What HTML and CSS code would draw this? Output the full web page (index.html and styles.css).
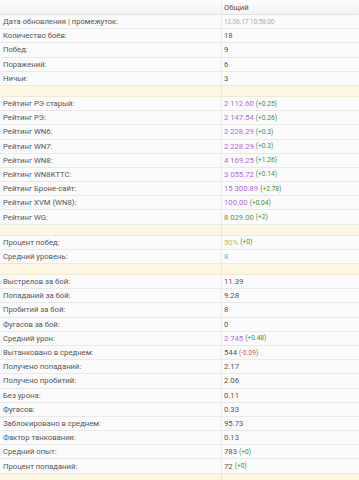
FILE: index.html
```html
<!DOCTYPE html>
<html lang="ru">
<head>
<meta charset="utf-8">
<link rel="stylesheet" href="styles.css">
</head>
<body>
<div class="stats">
  <div class="row head"><div class="k"></div><div class="v">Общий</div></div>
  <div class="row"><div class="k">Дата обновления | промежуток:</div><div class="v"><span class="date">12.06.17 10:58:00</span></div></div>
  <div class="row"><div class="k">Количество боёв:</div><div class="v">18</div></div>
  <div class="row"><div class="k">Побед:</div><div class="v">9</div></div>
  <div class="row"><div class="k">Поражений:</div><div class="v">6</div></div>
  <div class="row"><div class="k">Ничьи:</div><div class="v">3</div></div>
  <div class="row sep"><div class="k"></div><div class="v"></div></div>
  <div class="row"><div class="k">Рейтинг РЭ старый:</div><div class="v"><span class="purple">2 112.60</span> <span class="up">(+0.25)</span></div></div>
  <div class="row"><div class="k">Рейтинг РЭ:</div><div class="v"><span class="purple">2 147.54</span> <span class="up">(+0.26)</span></div></div>
  <div class="row"><div class="k">Рейтинг WN6:</div><div class="v"><span class="purple">2 228.29</span> <span class="up">(+0.3)</span></div></div>
  <div class="row"><div class="k">Рейтинг WN7:</div><div class="v"><span class="purple">2 228.29</span> <span class="up">(+0.3)</span></div></div>
  <div class="row"><div class="k">Рейтинг WN8:</div><div class="v"><span class="purple">4 169.25</span> <span class="up">(+1.26)</span></div></div>
  <div class="row"><div class="k">Рейтинг WN8KTTC:</div><div class="v"><span class="purple">3 055.72</span> <span class="up">(+0.14)</span></div></div>
  <div class="row"><div class="k">Рейтинг Броне-сайт:</div><div class="v"><span class="purple">15 300.89</span> <span class="up">(+2.78)</span></div></div>
  <div class="row"><div class="k">Рейтинг XVM (WN8):</div><div class="v"><span class="purple">100.00</span> <span class="up">(+0.04)</span></div></div>
  <div class="row"><div class="k">Рейтинг WG:</div><div class="v"><span class="green">8 029.00</span> <span class="up">(+2)</span></div></div>
  <div class="row sep"><div class="k"></div><div class="v"></div></div>
  <div class="row"><div class="k">Процент побед:</div><div class="v"><span class="olive">50%</span> <span class="up">(+0)</span></div></div>
  <div class="row"><div class="k">Средний уровень:</div><div class="v"><span class="blue">8</span></div></div>
  <div class="row sep"><div class="k"></div><div class="v"></div></div>
  <div class="row"><div class="k">Выстрелов за бой:</div><div class="v">11.39</div></div>
  <div class="row"><div class="k">Попаданий за бой:</div><div class="v">9.28</div></div>
  <div class="row"><div class="k">Пробитий за бой:</div><div class="v">8</div></div>
  <div class="row"><div class="k">Фугасов за бой:</div><div class="v">0</div></div>
  <div class="row"><div class="k">Средний урон:</div><div class="v"><span class="purple">2 745</span> <span class="up">(+0.48)</span></div></div>
  <div class="row"><div class="k">Вытанковано в среднем:</div><div class="v">544 <span class="down">(-0.09)</span></div></div>
  <div class="row"><div class="k">Получено попаданий:</div><div class="v">2.17</div></div>
  <div class="row"><div class="k">Получено пробитий:</div><div class="v">2.06</div></div>
  <div class="row"><div class="k">Без урона:</div><div class="v">0.11</div></div>
  <div class="row"><div class="k">Фугасов:</div><div class="v">0.33</div></div>
  <div class="row"><div class="k">Заблокировано в среднем:</div><div class="v">95.73</div></div>
  <div class="row"><div class="k">Фактор танкования:</div><div class="v">0.13</div></div>
  <div class="row"><div class="k">Средний опыт:</div><div class="v">783 <span class="up">(+0)</span></div></div>
  <div class="row"><div class="k">Процент попаданий:</div><div class="v">72 <span class="up">(+0)</span></div></div>
  <div class="row sep"><div class="k"></div><div class="v"></div></div>
</div>
</body>
</html>
```

FILE: styles.css
```css
html, body {
  margin: 0;
  padding: 0;
  background: #ffffff;
}
.stats {
  font-family: Roboto, "Noto Sans", sans-serif;
  font-size: 7.7px;
  color: #555;
  width: 359px;
  overflow: hidden;
}
.row {
  display: grid;
  grid-template-columns: 222px 1fr;
  height: 14.2px;
  box-sizing: border-box;
  border-bottom: 1px solid #e9e9e9;
  background: #fbfbfb;
}
.row > div {
  display: flex;
  align-items: center;
  white-space: nowrap;
}
.k {
  padding-left: 3px;
  border-right: 1px solid #ececec;
}
.v {
  padding-left: 2px;
}
.head {
  height: 15px;
  background: linear-gradient(#fdfdfd, #f3f3f3);
  border-bottom: 1px solid #e2e2e2;
}
.sep {
  height: 11px;
  background: #fdf6e0;
  border-bottom: 1px solid #f1ead4;
}
.sep .k { border-right-color: #efe6cc; }
.date {
  font-size: 6.3px;
  color: #aaa;
}
.purple { color: #b06ad2; }
.green { color: #5f9a3c; }
.olive { color: #c9bd58; }
.blue { color: #5cb8d8; }
.up {
  font-size: 6.6px;
  color: #3e8a3e;
  margin-left: 2px;
}
.down {
  font-size: 6.6px;
  color: #d9534f;
  margin-left: 2px;
}
```
